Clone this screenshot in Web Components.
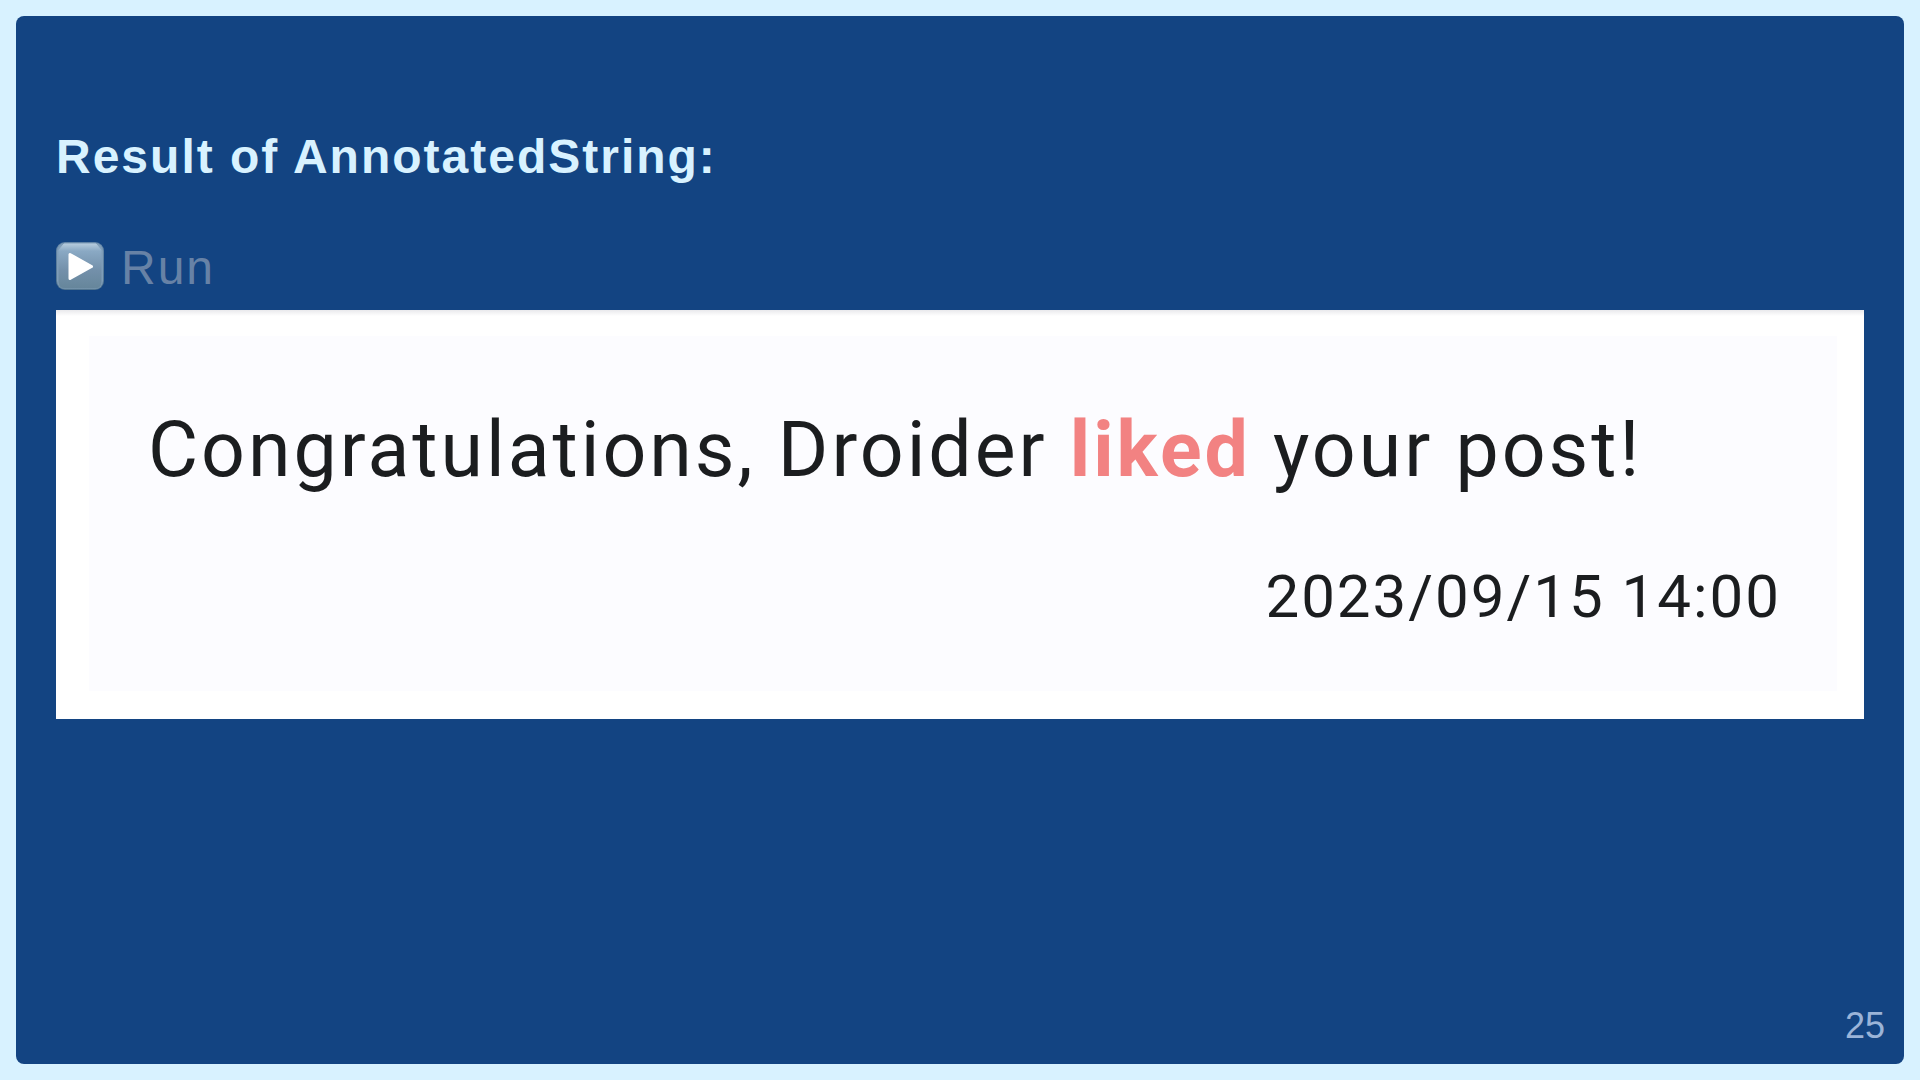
<!DOCTYPE html>
<html lang="en">
<head>
<meta charset="utf-8">
<title>Result of AnnotatedString</title>
<style>
html, body { height: 100%; margin: 0; }
body { font-family: "Liberation Sans", Arial, sans-serif; }
</style>
</head>
<body>
<deck-slide page="25">
  <slide-heading>Result of AnnotatedString:</slide-heading>
  <run-button>Run</run-button>
  <notification-card>
    Congratulations, Droider <strong>liked</strong> your post!
    <time slot="time" datetime="2023-09-15T14:00">2023/09/15 14:00</time>
  </notification-card>
</deck-slide>
<script>
const define = (name, html, setup) => {
  const template = document.createElement('template');
  template.innerHTML = html;
  customElements.define(name, class extends HTMLElement {
    constructor() {
      super();
      this.attachShadow({ mode: 'open' }).append(template.content.cloneNode(true));
    }
    connectedCallback() { if (setup) setup(this); }
  });
};

define('deck-slide', `
<style>
:host { display: flex; box-sizing: border-box; min-height: 100%; padding: 16px; background: #d8f2ff; }
main { flex: 1; display: flex; flex-direction: column; justify-content: space-between; box-sizing: border-box; background: #134482; border-radius: 8px; }
.body { padding: 113px 40px 0; }
footer { padding: 0 19px 17px; text-align: right; font-size: 36px; line-height: 42px; color: #9bb4d8; }
</style>
<main><div class="body"><slot></slot></div><footer></footer></main>`,
  el => { el.shadowRoot.querySelector('footer').textContent = el.getAttribute('page'); });

define('slide-heading', `
<style>
:host { display: block; }
h1 { margin: 0; font-size: 48px; line-height: 56px; letter-spacing: 2px; color: #d8f2ff; }
</style>
<h1><slot></slot></h1>`);

define('run-button', `
<style>
:host { display: block; margin-top: 55px; }
button { display: flex; align-items: center; gap: 17px; padding: 0; border: 0; background: none; font: inherit; font-size: 48px; line-height: 56px; letter-spacing: 2px; color: #6782a6; }
svg { display: block; width: 48px; height: 48px; margin-bottom: 4px; }
</style>
<button type="button">
<svg viewBox="0 0 48 48" aria-hidden="true">
  <defs>
    <linearGradient id="face" x1="0" y1="0" x2="0" y2="1"><stop offset="0" stop-color="#b4cadc"/><stop offset=".16" stop-color="#8aa9c4"/><stop offset=".6" stop-color="#7390aa"/><stop offset="1" stop-color="#66869b"/></linearGradient>
    <linearGradient id="rim" x1="0" y1="0" x2="0" y2="1"><stop offset="0" stop-color="#6486a8"/><stop offset="1" stop-color="#52758f"/></linearGradient>
  </defs>
  <rect width="48" height="48" rx="9" fill="url(#rim)"/>
  <rect x="1" y="1" width="46" height="46" rx="8" fill="#7f9db8"/>
  <path d="M8 2H40L45 8V40Q45 46 39 46H9Q3 46 3 40V8Z" fill="url(#face)" stroke="url(#face)" stroke-width="1" stroke-linejoin="round"/>
  <path d="M14 12.500V36.500L35.500 24.500Z" fill="#fff" stroke="#fff" stroke-width="3" stroke-linejoin="round"/>
</svg>
<span><slot></slot></span>
</button>`);

define('notification-card', `
<style>
:host { display: block; margin-top: 14px; padding: 26px 27px 28px 33px; background: linear-gradient(#e9e9ec, #fff 6px); font-family: Roboto, sans-serif; color: #1b1d1f; }
article { padding: 69px 56px 58px 59px; background: #fcfcff; }
p { margin: 0; font-size: 77px; line-height: 90px; letter-spacing: 3px; }
::slotted(strong) { font-weight: 700; color: #f28282; }
.time { margin-top: 66px; text-align: right; font-size: 60px; line-height: 72px; letter-spacing: 2px; }
</style>
<article><p><slot></slot></p><div class="time"><slot name="time"></slot></div></article>`);
</script>
</body>
</html>
